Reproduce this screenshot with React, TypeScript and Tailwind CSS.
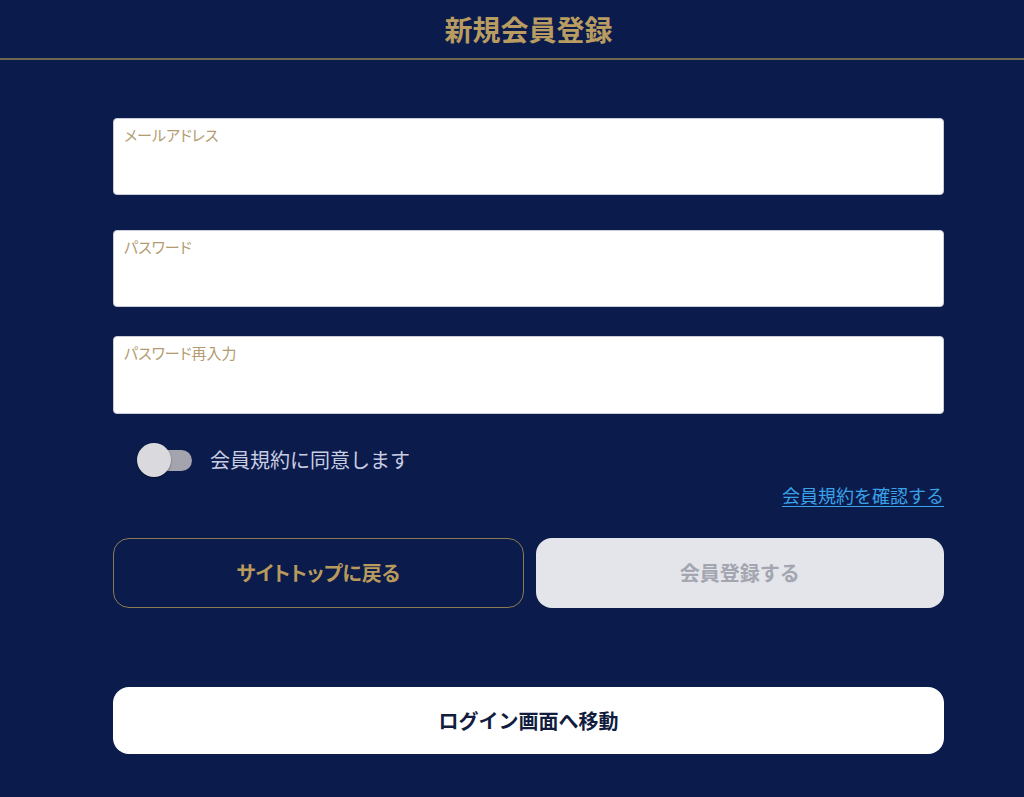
const jp = "font-['Noto_Sans_CJK_JP','Noto_Sans',sans-serif]";

function Field({ label, className = '' }: { label: string; className?: string }) {
  return (
    <div className={`h-[77px] rounded-[4px] bg-white border border-[#c9ccd6] px-[10px] pt-[3px] ${className}`}>
      <span className="text-[15px] leading-[22px] text-[#b39c72] [font-feature-settings:'palt']">{label}</span>
    </div>
  );
}

export default function App() {
  return (
    <div className={`min-h-[797px] bg-[#0b1b4b] ${jp}`}>
      <header className="h-[60px] flex items-center justify-center pl-[33px] border-b-2 border-[#6f664e]">
        <h1 className="text-[28px] leading-none font-bold text-[#b89c62]">新規会員登録</h1>
      </header>

      <main className="pl-[113px] pr-[80px] pt-[58px]">
        <Field label="メールアドレス" />
        <Field label="パスワード" className="mt-[35px]" />
        <Field label="パスワード再入力" className="mt-[29px] h-[78px]" />

        <div className="mt-[29px] h-[34px] flex items-center pl-[24px]">
          <div className="relative w-[55px] h-[34px]">
            <div className="absolute left-[13px] right-0 top-[7px] h-[21px] rounded-full bg-[#a3a4ad]" />
            <div className="absolute left-0 top-0 w-[34px] h-[34px] rounded-full bg-[#d9d9de] shadow-[0_1px_2px_rgba(0,0,0,0.4)]" />
          </div>
          <span className="ml-[18px] text-[20px] leading-none text-[#c9cde2]">会員規約に同意します</span>
        </div>

        <div className="mt-[6px] flex justify-end">
          <a href="#" className="text-[18px] leading-[24px] text-[#39a2e8] underline underline-offset-[3px]">
            会員規約を確認する
          </a>
        </div>

        <div className="mt-[31px] flex gap-[12px]">
          <button className="flex-1 h-[70px] rounded-[16px] border border-[#8c7b52] text-[20px] font-bold text-[#b89a5c] [font-feature-settings:'palt']">
            サイトトップに戻る
          </button>
          <button className="flex-1 h-[70px] rounded-[16px] bg-[#e4e5ea] text-[20px] font-bold text-[#a3a6b0]">
            会員登録する
          </button>
        </div>

        <button className="mt-[79px] w-full h-[67px] rounded-[16px] bg-white text-[20px] font-bold text-[#111c3e]">
          ログイン画面へ移動
        </button>
      </main>
    </div>
  );
}
